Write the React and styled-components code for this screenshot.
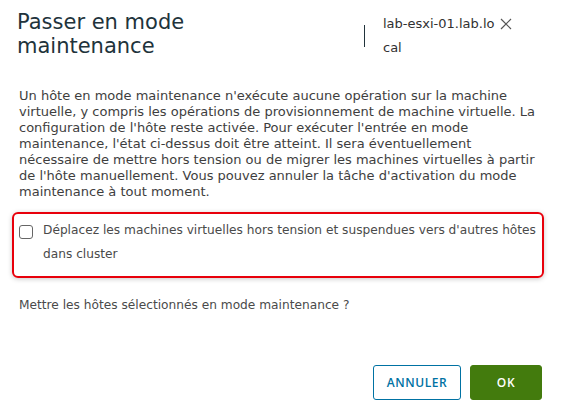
import React from "react";
import styled, { createGlobalStyle } from "styled-components";

const Global = createGlobalStyle`
  html, body { margin: 0; padding: 0; background: #ffffff; }
  body { font-family: "DejaVu Sans", "Noto Sans", sans-serif; }
  * { box-sizing: border-box; }
`;

const Dialog = styled.div`
  width: 561px;
  height: 417px;
  background: #ffffff;
  padding: 10px 17px 17px 17px;
  display: flex;
  flex-direction: column;
`;

const Header = styled.div`
  display: flex;
  align-items: flex-start;
`;

const Title = styled.h2`
  width: 260px;
  margin: 0;
  font-size: 21px;
  line-height: 24px;
  font-weight: 400;
  color: #21333b;
`;

const HostBlock = styled.div`
  margin-left: auto;
  margin-right: 32px;
  display: flex;
  align-items: flex-start;
`;

const Divider = styled.span`
  width: 1px;
  height: 22px;
  margin-top: 15px;
  margin-right: 18px;
  background: #21333b;
`;

const HostName = styled.div`
  width: 114px;
  margin-top: 2px;
  font-size: 13px;
  line-height: 24px;
  color: #313131;
  word-break: break-all;
`;

const CloseButton = styled.button`
  border: 0;
  background: none;
  padding: 0;
  margin: 8px 0 0 3px;
  width: 12px;
  height: 12px;
  display: flex;
  align-items: center;
  justify-content: center;
  cursor: pointer;
  color: #565656;
`;

const Body = styled.div`
  padding-left: 2px;
  margin-top: 28px;
`;

const Paragraph = styled.p`
  margin: 0;
  font-size: 13px;
  line-height: 16px;
  color: #3e3e3e;
`;

const Highlight = styled.div`
  margin: 12px 0 0 -7px;
  border: 2px solid #e8000b;
  border-radius: 6px;
  padding: 4px 4px 10px 5px;
  box-shadow: 0 1px 5px rgba(0, 0, 0, 0.22);
  display: flex;
  align-items: flex-start;
  gap: 10px;
`;

const Box = styled.span`
  flex: none;
  width: 14px;
  height: 14px;
  margin-top: 7px;
  border: 1px solid #666666;
  border-radius: 3px;
  background: #fff;
`;

const Label = styled.label`
  font-size: 12.2px;
  line-height: 24px;
  color: #4a4a4a;
`;

const Question = styled.p`
  margin: 15px 0 0;
  font-size: 12.2px;
  line-height: 24px;
  color: #4a4a4a;
`;

const Footer = styled.div`
  margin-top: auto;
  padding-right: 2px;
  display: flex;
  justify-content: flex-end;
  gap: 9px;
`;

const Button = styled.button`
  height: 35px;
  padding: 0;
  width: ${(p) => (p.$primary ? "72px" : "88px")};
  border-radius: 3px;
  border: 1px solid ${(p) => (p.$primary ? "#437b0d" : "#0072a3")};
  background: ${(p) => (p.$primary ? "#437b0d" : "#ffffff")};
  color: ${(p) => (p.$primary ? "#ffffff" : "#0072a3")};
  font-family: "Open Sans", "Noto Sans", sans-serif;
  font-size: 12px;
  font-weight: 600;
  letter-spacing: 0.6px;
  text-transform: uppercase;
`;

export default function App() {
  return (
    <>
      <Global />
      <Dialog>
        <Header>
          <Title>Passer en mode maintenance</Title>
          <HostBlock>
            <Divider />
            <HostName>lab-esxi-01.lab.local</HostName>
            <CloseButton aria-label="Fermer">
              <svg width="12" height="12" viewBox="0 0 12 12">
                <path d="M1 1 L11 11 M11 1 L1 11" stroke="currentColor" strokeWidth="1.2" fill="none" />
              </svg>
            </CloseButton>
          </HostBlock>
        </Header>
        <Body>
          <Paragraph>
            Un hôte en mode maintenance n'exécute aucune opération sur la machine
            virtuelle, y compris les opérations de provisionnement de machine virtuelle. La
            configuration de l'hôte reste activée. Pour exécuter l'entrée en mode
            maintenance, l'état ci-dessus doit être atteint. Il sera éventuellement
            nécessaire de mettre hors tension ou de migrer les machines virtuelles à partir
            de l'hôte manuellement. Vous pouvez annuler la tâche d'activation du mode
            maintenance à tout moment.
          </Paragraph>
          <Highlight>
            <Box />
            <Label>
              Déplacez les machines virtuelles hors tension et suspendues vers d'autres hôtes dans cluster
            </Label>
          </Highlight>
          <Question>Mettre les hôtes sélectionnés en mode maintenance ?</Question>
        </Body>
        <Footer>
          <Button>Annuler</Button>
          <Button $primary>OK</Button>
        </Footer>
      </Dialog>
    </>
  );
}
